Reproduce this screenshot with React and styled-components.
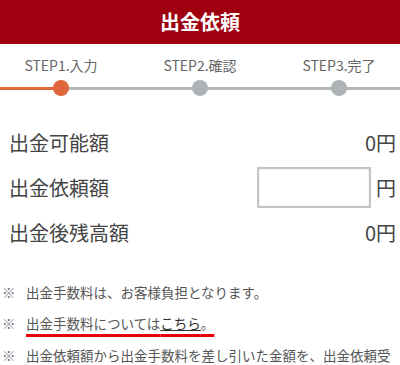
import React from "react";
import styled, { createGlobalStyle } from "styled-components";

const Global = createGlobalStyle`
  html, body { margin: 0; padding: 0; background: #fff; }
  body { font-family: "Noto Sans CJK JP", "Noto Sans", sans-serif; color: #444; }
  * { box-sizing: border-box; }
`;

const Page = styled.div`
  width: 400px;
  overflow: hidden;
`;

const Header = styled.header`
  height: 44px;
  background: #9e0010;
  display: flex;
  align-items: center;
  justify-content: center;
`;

const Title = styled.h1`
  margin: 0;
  font-size: 20px;
  font-weight: 700;
  color: #fff;
  line-height: 1;
`;

const Steps = styled.div`
  position: relative;
  display: flex;
  justify-content: space-between;
  padding-top: 11px;
  &::before {
    content: "";
    position: absolute;
    left: 0;
    right: 0;
    top: 42.5px;
    height: 3px;
    background: linear-gradient(to right, #e0673d 61px, #b4b8b9 61px);
  }
`;

const Step = styled.div`
  position: relative;
  width: 122px;
  display: flex;
  flex-direction: column;
  align-items: center;
  gap: 5px;
`;

const StepLabel = styled.span`
  font-size: 14px;
  line-height: 20px;
  color: #666;
  white-space: nowrap;
`;

const Dot = styled.span`
  width: 16px;
  height: 16px;
  border-radius: 50%;
  background: ${(p) => (p.$active ? "#e0673d" : "#adb3b5")};
`;

const Rows = styled.div`
  margin-top: 24px;
  padding: 0 4px 0 9px;
`;

const Row = styled.div`
  height: 45px;
  display: flex;
  align-items: center;
  justify-content: space-between;
`;

const Label = styled.span`
  font-size: 20px;
  line-height: 1;
  color: #444;
`;

const Value = styled.span`
  display: flex;
  align-items: center;
  gap: 5px;
  font-size: 20px;
  line-height: 1;
  color: #444;
`;

const AmountInput = styled.input`
  width: 114px;
  height: 41px;
  border: 2px solid #c4c4c4;
  box-shadow: inset 0 0 2px rgba(0, 0, 0, 0.15);
  background: #fff;
  font-size: 18px;
  padding: 0 6px;
  outline: none;
`;

const Notes = styled.ul`
  list-style: none;
  margin: 25.5px 0 0;
  padding: 0;
  display: flex;
  flex-direction: column;
  gap: 9.5px;
`;

const Note = styled.li`
  display: flex;
  font-size: 13.5px;
  line-height: 22px;
  color: #555;
`;

const Mark = styled.span`
  flex: none;
  width: 26px;
  padding-left: 2px;
  color: #777;
`;

const NoteText = styled.span`
  flex: 1;
  padding-right: 6px;
`;

const Highlight = styled.span`
  text-decoration: underline;
  text-decoration-color: #e8000b;
  text-decoration-thickness: 2.5px;
  text-underline-offset: 5px;
`;

const Link = styled.a`
  color: #333;
  text-decoration: underline;
  text-decoration-color: #333;
  text-decoration-thickness: 1px;
  text-underline-offset: 1px;
`;

export default function App() {
  return (
    <Page>
      <Global />
      <Header>
        <Title>出金依頼</Title>
      </Header>
      <Steps>
        <Step>
          <StepLabel>STEP1.入力</StepLabel>
          <Dot $active />
        </Step>
        <Step>
          <StepLabel>STEP2.確認</StepLabel>
          <Dot />
        </Step>
        <Step>
          <StepLabel>STEP3.完了</StepLabel>
          <Dot />
        </Step>
      </Steps>
      <Rows>
        <Row>
          <Label>出金可能額</Label>
          <Value>0円</Value>
        </Row>
        <Row>
          <Label>出金依頼額</Label>
          <Value>
            <AmountInput type="text" />
            円
          </Value>
        </Row>
        <Row>
          <Label>出金後残高額</Label>
          <Value>0円</Value>
        </Row>
      </Rows>
      <Notes>
        <Note>
          <Mark>※</Mark>
          <NoteText>出金手数料は、お客様負担となります。</NoteText>
        </Note>
        <Note>
          <Mark>※</Mark>
          <NoteText>
            <Highlight>
              出金手数料については<Link href="#">こちら</Link>。
            </Highlight>
          </NoteText>
        </Note>
        <Note>
          <Mark>※</Mark>
          <NoteText>
            出金依頼額から出金手数料を差し引いた金額を、出金依頼受付時に登録されている口座へお振込みいたします。
          </NoteText>
        </Note>
      </Notes>
    </Page>
  );
}
